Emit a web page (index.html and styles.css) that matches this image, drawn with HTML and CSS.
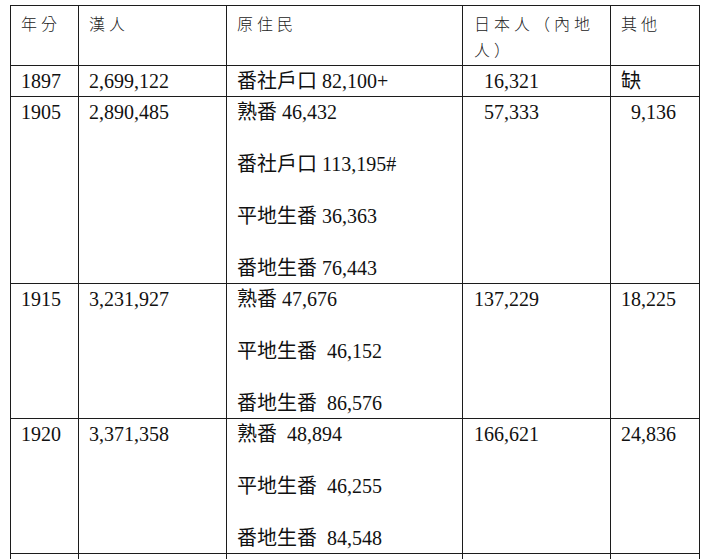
FILE: index.html
```html
<!DOCTYPE html>
<html lang="zh-Hant">
<head>
<meta charset="utf-8">
<title>人口統計</title>
<link rel="stylesheet" href="styles.css">
</head>
<body>
<table class="pop">
  <colgroup>
    <col class="c-year">
    <col class="c-han">
    <col class="c-native">
    <col class="c-jp">
    <col class="c-other">
  </colgroup>
  <thead>
    <tr>
      <th>年分</th>
      <th>漢人</th>
      <th>原住民</th>
      <th class="jp">日本人（內地人）</th>
      <th>其他</th>
    </tr>
  </thead>
  <tbody>
    <tr>
      <td>1897</td>
      <td>2,699,122</td>
      <td>番社戶口 82,100+</td>
      <td class="jp">&nbsp;&nbsp;16,321</td>
      <td>缺</td>
    </tr>
    <tr>
      <td>1905</td>
      <td>2,890,485</td>
      <td>
        <div class="ln">熟番 46,432</div>
        <div class="ln">番社戶口 113,195#</div>
        <div class="ln">平地生番 36,363</div>
        <div class="ln">番地生番 76,443</div>
      </td>
      <td class="jp">&nbsp;&nbsp;57,333</td>
      <td>&nbsp;&nbsp;9,136</td>
    </tr>
    <tr>
      <td>1915</td>
      <td>3,231,927</td>
      <td>
        <div class="ln">熟番 47,676</div>
        <div class="ln">平地生番&nbsp; 46,152</div>
        <div class="ln">番地生番&nbsp; 86,576</div>
      </td>
      <td class="jp">137,229</td>
      <td>18,225</td>
    </tr>
    <tr>
      <td>1920</td>
      <td>3,371,358</td>
      <td>
        <div class="ln">熟番&nbsp; 48,894</div>
        <div class="ln">平地生番&nbsp; 46,255</div>
        <div class="ln">番地生番&nbsp; 84,548</div>
      </td>
      <td class="jp">166,621</td>
      <td>24,836</td>
    </tr>
    <tr class="cut">
      <td></td>
      <td></td>
      <td></td>
      <td class="jp"></td>
      <td></td>
    </tr>
  </tbody>
</table>
</body>
</html>
```

FILE: styles.css
```css
html, body {
  margin: 0;
  background: #ffffff;
}

body {
  padding: 5px 0 0 10px;
  font-family: "Liberation Serif", "Noto Sans CJK TC", serif;
  color: #111111;
}

.pop {
  border-collapse: collapse;
  table-layout: fixed;
  width: 690px;
}

.c-year { width: 68px; }
.c-han { width: 148px; }
.c-native { width: 236px; }
.c-jp { width: 148px; }
.c-other { width: 89px; }

.pop th,
.pop td {
  border: 1px solid #1c1c1c;
  vertical-align: top;
  text-align: left;
  padding: 2px 8px 2px 10px;
  font-size: 20px;
  line-height: 26px;
}

.pop td {
  font-weight: 400;
}

.pop th {
  font-family: "Noto Sans CJK TC", sans-serif;
  font-weight: 300;
  font-size: 16px;
  letter-spacing: 4px;
  padding-top: 4px;
  padding-bottom: 3px;
  height: 52px;
  color: #222222;
}

.pop .jp {
  padding-left: 11px;
}

.ln + .ln {
  margin-top: 26px;
}

.cut td {
  height: 60px;
}
```
